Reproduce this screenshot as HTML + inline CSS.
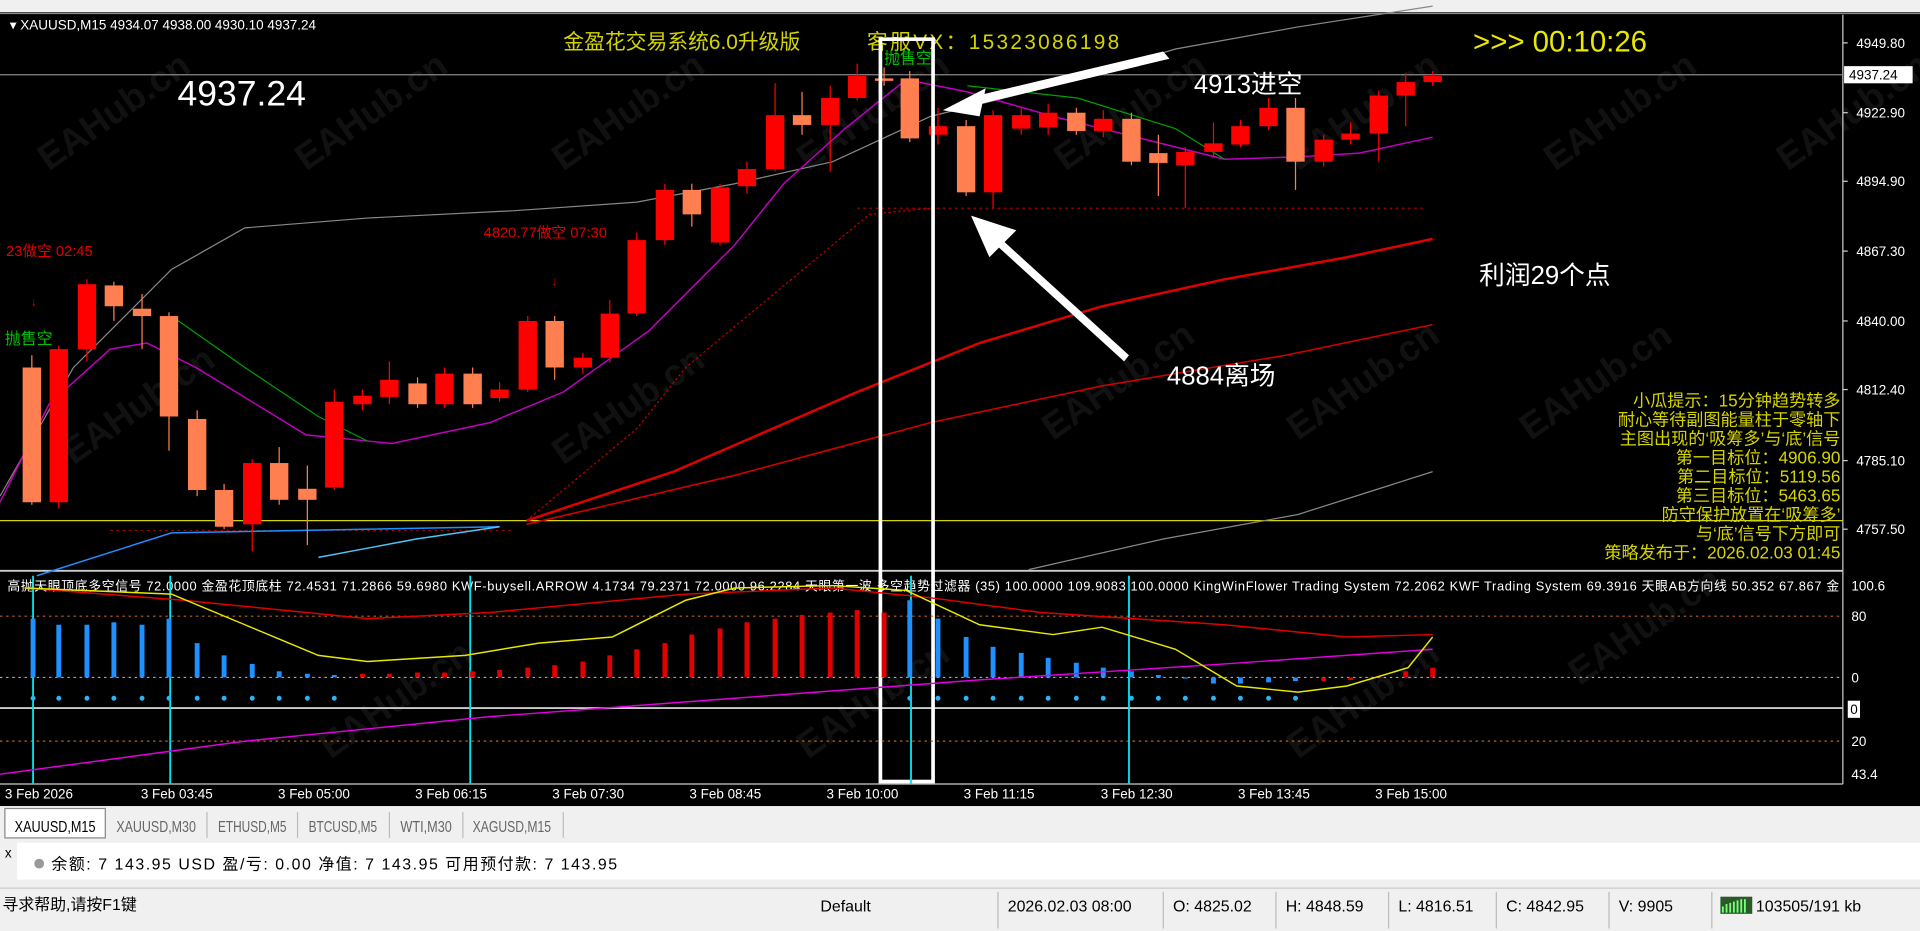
<!DOCTYPE html>
<html><head><meta charset="utf-8"><style>
html,body{margin:0;padding:0;background:#000;width:1920px;height:931px;overflow:hidden}
svg{display:block}
text{font-family:"Liberation Sans","Noto Sans CJK SC",sans-serif}
</style></head><body>
<svg width="1920" height="931" viewBox="0 0 1568 760" preserveAspectRatio="none" xmlns="http://www.w3.org/2000/svg">
<rect x="0" y="0" width="1568" height="760" fill="#000"/>
<rect x="0" y="0" width="1568" height="10" fill="#f0f0f0"/>
<line x1="0" y1="11" x2="1568" y2="11" stroke="#888" stroke-width="1"/>
<g font-size="30" font-weight="bold" fill="#fff" opacity="0.07">
<text transform="translate(40,140) rotate(-35)">EAHub.cn</text><text transform="translate(250,140) rotate(-35)">EAHub.cn</text><text transform="translate(460,140) rotate(-35)">EAHub.cn</text><text transform="translate(660,140) rotate(-35)">EAHub.cn</text><text transform="translate(870,140) rotate(-35)">EAHub.cn</text><text transform="translate(1060,140) rotate(-35)">EAHub.cn</text><text transform="translate(1270,140) rotate(-35)">EAHub.cn</text><text transform="translate(1460,140) rotate(-35)">EAHub.cn</text>
<text transform="translate(60,380) rotate(-35)">EAHub.cn</text><text transform="translate(460,380) rotate(-35)">EAHub.cn</text><text transform="translate(860,360) rotate(-35)">EAHub.cn</text><text transform="translate(1060,360) rotate(-35)">EAHub.cn</text><text transform="translate(1250,360) rotate(-35)">EAHub.cn</text>
<text transform="translate(270,620) rotate(-35)">EAHub.cn</text><text transform="translate(660,620) rotate(-35)">EAHub.cn</text><text transform="translate(1060,620) rotate(-35)">EAHub.cn</text><text transform="translate(1290,560) rotate(-35)">EAHub.cn</text>
</g>
<line x1="1505" y1="12" x2="1505" y2="640" stroke="#ccc" stroke-width="1"/>
<line x1="0" y1="466" x2="1505" y2="466" stroke="#ccc" stroke-width="1.5"/>
<line x1="0" y1="578" x2="1505" y2="578" stroke="#ccc" stroke-width="1.5"/>
<line x1="0" y1="640" x2="1505" y2="640" stroke="#ccc" stroke-width="1"/>
<line x1="0" y1="61" x2="1505" y2="61" stroke="#888" stroke-width="1"/>
<line x1="0" y1="425" x2="1505" y2="425" stroke="#d4d400" stroke-width="1"/>
<line x1="90" y1="433" x2="420" y2="433" stroke="#a00" stroke-width="1" stroke-dasharray="2,3"/>
<line x1="700" y1="170" x2="1165" y2="170" stroke="#a00" stroke-width="1" stroke-dasharray="2,3"/>
<polyline fill="none" stroke="#888" stroke-width="1" points="0,405 60,300 140,220 200,186 300,178 420,172 520,165 600,150 680,132 760,95 860,70 960,40 1060,22 1170,5"/>
<polyline fill="none" stroke="#888" stroke-width="1" points="840,465 950,440 1060,420 1170,385"/>
<polyline fill="none" stroke="#c000c0" stroke-width="1.2" points="0,410 40,330 90,285 120,280 160,300 250,355 320,362 400,345 460,320 530,270 600,200 640,150 690,105 740,65 790,75 860,95 940,115 1000,130 1060,128 1110,125 1170,112"/>
<polyline fill="none" stroke="#00a000" stroke-width="1" points="140,258 200,300 260,340 300,360"/>
<polyline fill="none" stroke="#00a000" stroke-width="1" points="790,70 880,80 960,105 1000,130"/>
<polyline fill="none" stroke="#e00000" stroke-width="2" points="430,425 550,385 700,320 800,280 900,250 1000,228 1100,210 1170,195"/>
<polyline fill="none" stroke="#d00000" stroke-width="1.3" points="430,428 600,388 760,345 900,315 1050,290 1170,265"/>
<polyline fill="none" stroke="#c00000" stroke-width="1" stroke-dasharray="2,2" points="430,425 520,350 560,300 620,250 680,200 710,175 760,170"/>
<polyline fill="none" stroke="#1e90ff" stroke-width="1.2" points="30,470 140,435 408,430"/>
<polyline fill="none" stroke="#4fc3f7" stroke-width="1.2" points="260,455 340,440 408,430"/>
<g id="candles"></g>
<g fill="#fff" font-size="11">
<text x="1516" y="39">4949.80</text><text x="1516" y="96">4922.90</text><text x="1516" y="152">4894.90</text><text x="1516" y="209">4867.30</text><text x="1516" y="266">4840.00</text><text x="1516" y="322">4812.40</text><text x="1516" y="380">4785.10</text><text x="1516" y="436">4757.50</text>
<text x="1512" y="482">100.6</text><text x="1512" y="507">80</text><text x="1512" y="557">0</text><text x="1512" y="609">20</text><text x="1512" y="636">43.4</text>
</g>
<g stroke="#ccc"><line x1="1505" y1="35" x2="1509" y2="35"/><line x1="1505" y1="92" x2="1509" y2="92"/><line x1="1505" y1="148" x2="1509" y2="148"/><line x1="1505" y1="205" x2="1509" y2="205"/><line x1="1505" y1="262" x2="1509" y2="262"/><line x1="1505" y1="318" x2="1509" y2="318"/><line x1="1505" y1="376" x2="1509" y2="376"/><line x1="1505" y1="432" x2="1509" y2="432"/></g>
<rect x="1506" y="54" width="56" height="14" fill="#fff"/><text x="1510" y="65" font-size="11" fill="#000">4937.24</text>
<rect x="1509" y="572" width="10" height="14" fill="#fff"/><text x="1511" y="583" font-size="11" fill="#000">0</text>
<text x="8" y="24" font-size="11" fill="#fff">▾ XAUUSD,M15  4934.07 4938.00 4930.10 4937.24</text>
<text x="460" y="40" font-size="17" fill="#d4d400">金盈花交易系统6.0升级版</text>
<text x="708" y="40" font-size="17" fill="#d4d400" textLength="206">客服VX：15323086198</text>
<text x="1203" y="42" font-size="24" fill="#e8e800">&gt;&gt;&gt; 00:10:26</text>
<text x="145" y="86" font-size="29" fill="#fff">4937.24</text>
<text x="5" y="209" font-size="12" fill="#e00000">23做空 02:45</text>
<text x="4" y="281" font-size="13" fill="#00c000">抛售空</text>
<text x="395" y="194" font-size="12" fill="#e00000">4820.77做空 07:30</text>
<text x="722" y="52" font-size="13" fill="#00c000">抛售空</text>
<text x="25" y="250" font-size="10" fill="#e00000">↓</text><text x="450" y="233" font-size="10" fill="#e00000">↓</text>
<text x="975" y="76" font-size="21" fill="#fff">4913进空</text>
<text x="953" y="314" font-size="21" fill="#fff">4884离场</text>
<text x="1208" y="232" font-size="21" fill="#fff">利润29个点</text>
<g font-size="14" fill="#d4d400" text-anchor="end">
<text x="1503" y="332">小瓜提示：15分钟趋势转多</text>
<text x="1503" y="347.5">耐心等待副图能量柱于零轴下</text>
<text x="1503" y="363">主图出现的‘吸筹多’与‘底’信号</text>
<text x="1503" y="378.5">第一目标位：4906.90</text>
<text x="1503" y="394">第二目标位：5119.56</text>
<text x="1503" y="409.5">第三目标位：5463.65</text>
<text x="1503" y="425">防守保护放置在‘吸筹多’</text>
<text x="1503" y="440.5">与‘底’信号下方即可</text>
<text x="1503" y="456">策略发布于：2026.02.03 01:45</text>
</g>
<rect x="719" y="32" width="43" height="606" fill="none" stroke="#fff" stroke-width="3"/>
<polygon points="950,42 790,80 775,90 795,93 800,85 955,48" fill="#fff"/>
<polygon points="770,90 805,72 800,95" fill="#fff"/>
<polygon points="922,290 812,190 808,195 918,295" fill="#fff"/>
<polygon points="793,176 830,188 808,210" fill="#fff"/>
<text x="6" y="482" font-size="10.5" fill="#fff" textLength="1496">高抛天眼顶底多空信号 72.0000  金盈花顶底柱 72.4531 71.2866 59.6980  KWF-buysell.ARROW 4.1734 79.2371 72.0000 96.2284  天眼第一波 多空趋势过滤器 (35) 100.0000 109.9083 100.0000  KingWinFlower Trading System 72.2062  KWF Trading System 69.3916  天眼AB方向线 50.352 67.867  金</text>
<line x1="0" y1="503" x2="1505" y2="503" stroke="#c06020" stroke-dasharray="2,3"/>
<line x1="0" y1="553" x2="1505" y2="553" stroke="#aaa" stroke-dasharray="2,3"/>
<line x1="0" y1="605" x2="1505" y2="605" stroke="#c06020" stroke-dasharray="2,3"/>
<g stroke="#00e5ee" stroke-width="1.5"><line x1="27" y1="470" x2="27" y2="640"/><line x1="139" y1="470" x2="139" y2="640"/><line x1="384" y1="470" x2="384" y2="640"/><line x1="744" y1="470" x2="744" y2="640"/><line x1="922" y1="470" x2="922" y2="640"/></g>
<g id="bars"></g>
<polyline fill="none" stroke="#e000e0" stroke-width="1.2" points="0,632 200,605 400,585 600,570 800,555 1000,542 1170,530"/>
<polyline fill="none" stroke="#e00000" stroke-width="1.2" points="20,480 150,490 300,505 400,500 560,485 680,480 760,488 850,500 1000,510 1100,520 1170,518"/>
<polyline fill="none" stroke="#e8e800" stroke-width="1.2" points="20,480 140,485 200,510 260,535 300,540 380,535 440,525 500,520 560,490 600,480 680,478 740,482 800,510 860,518 900,512 960,530 1010,560 1060,565 1100,560 1150,545 1170,520"/>
<g fill="#fff" font-size="11"><text x="4" y="652">3 Feb 2026</text><text x="115" y="652">3 Feb 03:45</text><text x="227" y="652">3 Feb 05:00</text><text x="339" y="652">3 Feb 06:15</text><text x="451" y="652">3 Feb 07:30</text><text x="563" y="652">3 Feb 08:45</text><text x="675" y="652">3 Feb 10:00</text><text x="787" y="652">3 Feb 11:15</text><text x="899" y="652">3 Feb 12:30</text><text x="1011" y="652">3 Feb 13:45</text><text x="1123" y="652">3 Feb 15:00</text></g>
<rect x="0" y="658" width="1568" height="102" fill="#f0f0f0"/>
<rect x="4" y="660" width="82" height="24" fill="#fff" stroke="#888"/>
<text x="12" y="679" font-size="13" fill="#000" textLength="66" lengthAdjust="spacingAndGlyphs">XAUUSD,M15</text>
<g font-size="13" fill="#666"><text x="95" y="679" textLength="65" lengthAdjust="spacingAndGlyphs">XAUUSD,M30</text><text x="178" y="679" textLength="56" lengthAdjust="spacingAndGlyphs">ETHUSD,M5</text><text x="252" y="679" textLength="56" lengthAdjust="spacingAndGlyphs">BTCUSD,M5</text><text x="327" y="679" textLength="42" lengthAdjust="spacingAndGlyphs">WTI,M30</text><text x="386" y="679" textLength="64" lengthAdjust="spacingAndGlyphs">XAGUSD,M15</text></g>
<g stroke="#bbb"><line x1="169" y1="663" x2="169" y2="684"/><line x1="243" y1="663" x2="243" y2="684"/><line x1="318" y1="663" x2="318" y2="684"/><line x1="378" y1="663" x2="378" y2="684"/><line x1="460" y1="663" x2="460" y2="684"/></g>
<rect x="14" y="688" width="1554" height="30" fill="#fff"/>
<text x="4" y="700" font-size="11" fill="#000">x</text>
<circle cx="32" cy="705" r="4" fill="#999"/>
<text x="42" y="710" font-size="13" fill="#000" textLength="462">余额: 7 143.95 USD  盈/亏: 0.00  净值: 7 143.95  可用预付款: 7 143.95</text>
<line x1="0" y1="725" x2="1568" y2="725" stroke="#ccc"/>
<text x="2" y="743" font-size="13" fill="#000">寻求帮助,请按F1键</text>
<g font-size="13" fill="#000"><text x="670" y="744">Default</text><text x="823" y="744">2026.02.03 08:00</text><text x="958" y="744">O: 4825.02</text><text x="1050" y="744">H: 4848.59</text><text x="1142" y="744">L: 4816.51</text><text x="1230" y="744">C: 4842.95</text><text x="1322" y="744">V: 9905</text><text x="1434" y="744">103505/191 kb</text></g>
<g stroke="#bbb"><line x1="815" y1="728" x2="815" y2="758"/><line x1="950" y1="728" x2="950" y2="758"/><line x1="1042" y1="728" x2="1042" y2="758"/><line x1="1134" y1="728" x2="1134" y2="758"/><line x1="1222" y1="728" x2="1222" y2="758"/><line x1="1314" y1="728" x2="1314" y2="758"/><line x1="1398" y1="728" x2="1398" y2="758"/></g>
<rect x="1405" y="732" width="26" height="14" fill="#2a5a2a"/><path d="M1407 745 V740 M1410 745 V738 M1413 745 V737 M1416 745 V736 M1419 745 V735 M1422 745 V734 M1425 745 V734" stroke="#7f7" stroke-width="1.5"/>
</svg>
<script>
(function(){
var NS='http://www.w3.org/2000/svg';
function el(p,tag,a){var e=document.createElementNS(NS,tag);for(var k in a)e.setAttribute(k,a[k]);p.appendChild(e);}
var c=[[26,'c',300,410,290,412],[48,'r',285,410,282,415],[71,'r',232,285,228,295],[93,'c',233,250,230,262],[116,'c',252,258,240,285],[138,'c',258,340,255,368],[161,'c',342,400,335,405],[183,'c',400,430,395,432],[206,'r',378,428,375,450],[228,'c',378,408,365,412],[251,'c',399,408,380,445],[273,'r',328,398,318,400],[296,'r',323,330,318,335],[318,'r',310,324,295,330],[341,'c',313,330,308,333],[363,'r',305,330,300,333],[386,'c',305,330,300,333],[408,'r',318,325,312,328],[431,'r',262,318,258,320],[453,'c',262,300,258,310],[476,'r',292,300,288,305],[498,'r',256,292,245,296],[520,'r',196,256,190,258],[543,'r',155,196,150,200],[565,'c',155,175,150,185],[588,'r',153,198,150,200],[610,'r',138,152,132,158],[633,'r',94,138,68,140],[655,'c',94,102,75,110],[678,'r',80,102,70,140],[700,'r',62,80,52,82],[722,'c',64,66,55,70],[743,'c',64,113,58,116],[766,'r',103,110,88,118],[789,'c',103,157,98,160],[811,'r',94,157,90,170],[834,'r',94,105,88,110],[856,'r',92,104,85,110],[879,'c',92,107,88,110],[901,'r',97,107,90,112],[924,'c',97,132,92,135],[946,'c',125,133,110,160],[968,'r',124,135,120,170],[991,'r',117,124,100,128],[1013,'r',103,118,98,120],[1036,'r',88,103,80,106],[1058,'c',88,132,80,155],[1081,'r',114,132,110,136],[1103,'r',109,114,100,118],[1126,'r',78,109,74,132],[1148,'r',67,78,60,103],[1170,'r',62,67,58,70]];
var g=document.getElementById('candles');
c.forEach(function(k){var col=k[1]=='r'?'#ff0000':'#ff7f50';
el(g,'line',{x1:k[0],y1:k[4],x2:k[0],y2:k[5],stroke:col,'stroke-width':1});
el(g,'rect',{x:k[0]-7.5,y:k[2],width:15,height:Math.max(2,k[3]-k[2]),fill:col});});
var b=document.getElementById('bars');
var bars=[[27,'b',505],[48,'b',510],[71,'b',510],[93,'b',508],[116,'b',510],[138,'b',505],[161,'b',525],[183,'b',535],[206,'b',542],[228,'b',548],[251,'b',550],[273,'b',551],[296,'r',550],[318,'r',550],[341,'r',549],[363,'r',549],[386,'r',548],[408,'r',547],[431,'r',545],[453,'r',543],[476,'r',540],[498,'r',535],[520,'r',530],[543,'r',525],[565,'r',518],[588,'r',513],[610,'r',508],[633,'r',505],[655,'r',502],[678,'r',500],[700,'r',498],[722,'r',500],[743,'b',490],[766,'b',505],[789,'b',520],[811,'b',528],[834,'b',533],[856,'b',537],[879,'b',541],[901,'b',545],[924,'b',548],[946,'b',551],[968,'b',553],[991,'b',558],[1013,'b',558],[1036,'b',557],[1058,'b',556],[1081,'r',556],[1103,'r',555],[1126,'r',552],[1148,'r',548],[1170,'r',545]];
bars.forEach(function(k){var col=k[1]=='r'?'#e00000':'#1e90ff';var y1=Math.min(k[2],553),y2=Math.max(k[2],553);
el(b,'rect',{x:k[0]-2,y:y1,width:4,height:Math.max(1,y2-y1),fill:col});
if(k[1]=='b')el(b,'circle',{cx:k[0],cy:570,r:2,fill:'#29b6f6'});});
})();
</script>
</body></html>
